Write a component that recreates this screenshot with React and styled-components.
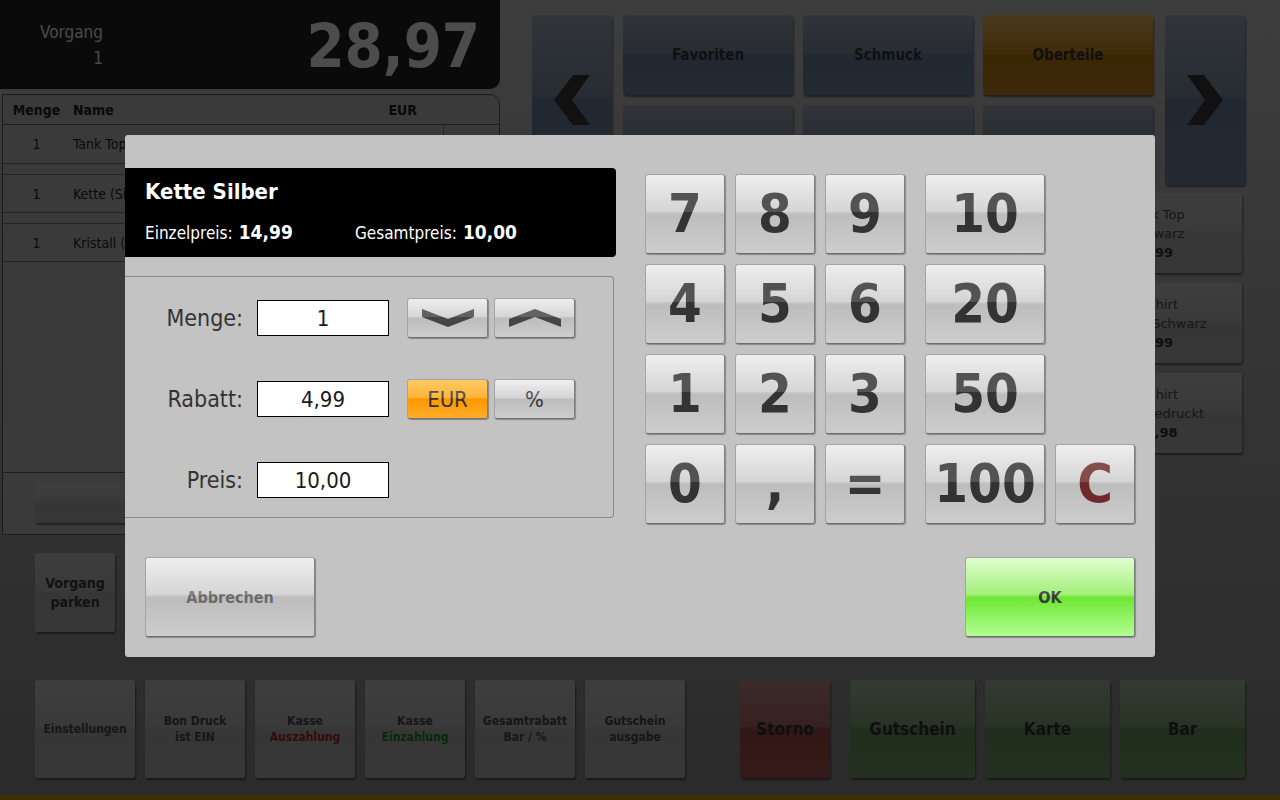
import React from 'react'
import styled, { createGlobalStyle, css } from 'styled-components'

const FONT = `"DejaVu Sans Condensed", "DejaVu Sans", sans-serif`

const GlobalStyle = createGlobalStyle`
  html, body { margin: 0; padding: 0; }
  body { background: #000; font-family: ${FONT}; }
  * { box-sizing: border-box; }
  button { font-family: ${FONT}; }
`

// glossy button backgrounds: light upper half, sharp step, slightly lighter foot
const gloss = (a, b, c, d) => css`
  background: linear-gradient(to bottom, ${a} 0%, ${b} 47%, ${c} 51%, ${d} 100%);
`

const Screen = styled.div`
  position: relative;
  width: 1280px;
  height: 800px;
  overflow: hidden;
  display: flex;
  flex-direction: column;
  background: linear-gradient(to bottom, #cdcdcd, #8f8f8f);
  font-family: ${FONT};
`

const Upper = styled.div`
  display: flex;
  height: 680px;
`

const LeftCol = styled.div`
  width: 500px;
  display: flex;
  flex-direction: column;
`

const TotalBar = styled.div`
  height: 89px;
  background: #222;
  border-radius: 0 0 10px 0;
  display: flex;
  align-items: center;
  justify-content: space-between;
  padding: 0 20px 0 40px;
  color: #fff;
`

const Vorgang = styled.div`
  text-align: right;
  font-size: 17px;
  line-height: 26px;
  color: #f2f2f2;
`

const Total = styled.div`
  font-size: 61px;
  font-weight: bold;
  line-height: 1;
  margin-top: 2px;
`

const ListPanel = styled.div`
  margin: 5px 0 0 2px;
  height: 441px;
  border: 1px solid #5a5a5a;
  border-radius: 0 10px 0 0;
  background: #c4c4c4;
  display: flex;
  flex-direction: column;
`

const rowGrid = css`
  display: grid;
  grid-template-columns: 67px 1fr 113px 56px;
  align-items: center;
`

const ListHeader = styled.div`
  ${rowGrid};
  height: 30px;
  border-bottom: 1px solid #6a6a6a;
  font-size: 14px;
  font-weight: bold;
  color: #1e1e1e;
`

const Cell = styled.div`
  padding: ${p => (p.$center ? '0' : '0 0 0 3px')};
  text-align: ${p => (p.$center ? 'center' : p.$right ? 'right' : 'left')};
  padding-right: ${p => (p.$right ? '26px' : '0')};
  white-space: nowrap;
  overflow: hidden;
`

const ListRow = styled.div`
  ${rowGrid};
  height: 39px;
  border-bottom: 1px solid #7a7a7a;
  font-size: 14px;
  color: #222;

  & + & {
    margin-top: 10px;
    border-top: 1px solid #7a7a7a;
  }
`

const ActionCell = styled.div`
  height: 100%;
  border-left: 1px solid #7a7a7a;
  display: flex;
  align-items: center;
  justify-content: center;
  gap: 6px;
`

const RoundIcon = styled.span`
  width: 16px;
  height: 16px;
  border-radius: 50%;
  background: ${p => p.$tone};
  color: #fff;
  font-size: 13px;
  line-height: 16px;
  text-align: center;
  font-weight: bold;
`

const ListBody = styled.div`
  flex: 1;
`

const ListFooter = styled.div`
  height: 62px;
  border-top: 1px solid #666;
  display: flex;
  gap: 30px;
  padding: 9px 0 0 32px;
`

const greyButton = css`
  border: none;
  border-radius: 3px;
  ${gloss('#cfcfcf', '#c2c2c2', '#b6b6b6', '#b8b8b8')};
  box-shadow: 1px 2px 2px rgba(0, 0, 0, 0.45);
  color: #4a4a4a;
  font-weight: bold;
`

const PanelButton = styled.button`
  ${greyButton};
  width: 200px;
  height: 41px;
  font-size: 14px;
  padding-left: 40px;
`

const ParkRow = styled.div`
  padding: 18px 0 0 35px;
`

const ParkButton = styled.button`
  ${greyButton};
  width: 80px;
  height: 79px;
  font-size: 14px;
  line-height: 19px;
  color: #3c3c3c;
`

const RightCol = styled.div`
  flex: 1;
  padding: 15px 35px 0 32px;
  display: flex;
  flex-direction: column;
`

const CategoryArea = styled.div`
  display: flex;
  gap: 11px;
  height: 170px;
`

const blueButton = css`
  border: none;
  border-radius: 3px;
  ${gloss('#a4b0c0', '#8496ac', '#6e86a4', '#768da9')};
  box-shadow: 1px 2px 2px rgba(0, 0, 0, 0.45);
`

const ArrowButton = styled.button`
  ${blueButton};
  width: 80px;
  height: 170px;
  display: flex;
  align-items: center;
  justify-content: center;
  padding: 0;
  margin-left: ${p => (p.$next ? '1px' : '0')};
`

const CategoryGrid = styled.div`
  display: grid;
  grid-template-columns: repeat(3, 170px);
  grid-template-rows: 80px 80px;
  gap: 10px;
`

const CategoryButton = styled.button`
  ${blueButton};
  ${p => p.$active && gloss('#f0bc64', '#d99420', '#c4800a', '#cc8c26')};
  font-size: 15px;
  font-weight: bold;
  color: #383838;
`

const ProductGrid = styled.div`
  margin-top: 8px;
  display: grid;
  grid-template-columns: repeat(4, 170px);
  grid-auto-rows: 80px;
  gap: 10px;
`

const ProductTile = styled.div`
  ${greyButton};
  display: flex;
  flex-direction: column;
  align-items: center;
  justify-content: center;
  font-family: "DejaVu Sans", sans-serif;
  font-weight: normal;
  font-size: 13px;
  line-height: 19px;
  color: #4a4a4a;
  padding-top: 1px;

  b { color: #333; }
`

const BottomBar = styled.div`
  height: 98px;
  margin-bottom: 17px;
  display: flex;
  padding-left: 35px;
`

const FuncGroup = styled.div`
  display: flex;
  gap: 10px;
`

const FuncButton = styled.button`
  ${greyButton};
  width: 100px;
  height: 98px;
  font-size: 12px;
  line-height: 16px;
  color: #4a4a4a;
`

const Tinted = styled.span`
  color: ${p => p.$tone};
`

const PayGroup = styled.div`
  display: flex;
  gap: 10px;
  margin-left: 55px;
`

const PayButton = styled.button`
  border: none;
  border-radius: 3px;
  height: 98px;
  width: ${p => p.$w}px;
  margin-right: ${p => (p.$gapAfter ? '10px' : '0')};
  box-shadow: 1px 2px 2px rgba(0, 0, 0, 0.45);
  font-size: 17px;
  font-weight: bold;
  color: #333;
  ${p =>
    p.$red
      ? gloss('#c89090', '#b86c6c', '#a84c4c', '#b25858')
      : gloss('#b0c4a6', '#8aab7c', '#6c9a5e', '#7aa46c')};
`

const GoldStrip = styled.div`
  height: 5px;
  margin-top: auto;
  background: #c89b00;
`

const Overlay = styled.div`
  position: absolute;
  inset: 0;
  background: rgba(0, 0, 0, 0.7);
`

const Dialog = styled.div`
  position: absolute;
  left: 125px;
  top: 135px;
  width: 1030px;
  height: 522px;
  background: #c3c3c3;
  border-radius: 3px;
  display: flex;
  flex-direction: column;
  padding-bottom: 20px;
`

const DialogBody = styled.div`
  display: flex;
  padding-top: 33px;
`

const LeftPane = styled.div`
  width: 491px;
  display: flex;
  flex-direction: column;
  gap: 19px;
`

const InfoBox = styled.div`
  height: 89px;
  background: #000;
  border-radius: 0 4px 4px 0;
  padding: 11px 20px 0;
  color: #fff;
`

const ItemTitle = styled.div`
  font-size: 22px;
  font-weight: bold;
  line-height: 26px;
`

const PriceLine = styled.div`
  display: flex;
  margin-top: 14px;
  line-height: 26px;
`

const PriceGroup = styled.div`
  width: ${p => p.$w || 'auto'};
  font-size: 17px;

  b {
    font-size: 19px;
    margin-left: 6px;
  }
`

const FormPanel = styled.div`
  width: 489px;
  height: 242px;
  border: 1px solid #8a8a8a;
  border-left: none;
  border-radius: 0 4px 4px 0;
  padding-top: 21px;
  display: flex;
  flex-direction: column;
  gap: 41px;
`

const FormRow = styled.div`
  display: flex;
  align-items: center;
  height: 40px;
`

const Label = styled.div`
  width: 132px;
  padding-right: 14px;
  text-align: right;
  font-size: 23px;
  color: #333;
`

const ValueBox = styled.div`
  width: 132px;
  height: 36px;
  background: #fff;
  border: 1px solid #000;
  display: flex;
  align-items: center;
  justify-content: center;
  font-size: 22px;
  color: #1a1a1a;
`

const ToggleGroup = styled.div`
  display: flex;
  gap: 6px;
  margin-left: 18px;
`

const keyBase = css`
  position: relative;
  padding: 0;
  border: 1px solid #a4a4a4;
  border-right-color: #808080;
  border-bottom-color: #6e6e6e;
  border-radius: 3px;
  box-shadow: 1px 1px 1px rgba(0, 0, 0, 0.3);
  ${gloss('#ececec', '#cdcdcd', '#bdbdbd', '#cdcdcd')};

  &::after {
    content: '';
    position: absolute;
    left: 0;
    right: 0;
    top: 0;
    height: 48%;
    border-radius: 2px 2px 0 0;
    background: rgba(255, 255, 255, 0.16);
    pointer-events: none;
  }
`

const SmallKey = styled.button`
  ${keyBase};
  width: 81px;
  height: 40px;
  display: flex;
  align-items: center;
  justify-content: center;
  font-size: 22px;
  color: #333;
  ${p => p.$active && gloss('#ffbf45', '#ffa714', '#ff9800', '#ffae2c')};
`

const Keypad = styled.div`
  margin: 6px 0 0 29px;
  display: grid;
  grid-template-columns: 80px 80px 80px 130px 80px;
  grid-template-rows: repeat(4, 80px);
  gap: 10px;
`

const Key = styled.button`
  ${keyBase};
  grid-column: ${p => p.$col};
  grid-row: ${p => p.$row};
  width: ${p => (p.$wide ? '120px' : '80px')};
  height: 80px;
  justify-self: end;
  font-size: 54px;
  font-weight: bold;
  line-height: 1;
  color: ${p => (p.$clear ? '#6e2a2a' : '#333')};
`

const DialogFooter = styled.div`
  margin-top: auto;
  display: flex;
  justify-content: space-between;
  padding: 0 20px;
`

const FooterButton = styled.button`
  ${keyBase};
  width: 170px;
  height: 80px;
  font-size: 16px;
  font-weight: bold;
  color: ${p => (p.$ok ? '#3a3a3a' : '#6a6a6a')};
  ${p => p.$ok && gloss('#dcffcc', '#99ee6a', '#6ee634', '#b2ff92')};

  &::after {
    background: rgba(255, 255, 255, ${p => (p.$ok ? 0.1 : 0.16)});
  }
`

const Chevron = ({ up }) => (
  <svg width="52" height="18" viewBox="0 0 52 18">
    <polygon
      fill="#454545"
      points={up ? '0,18 26,8 52,18 52,10 26,0 0,10' : '0,0 26,10 52,0 52,8 26,18 0,8'}
    />
  </svg>
)

const Arrow = ({ next }) => (
  <svg width="36" height="50" viewBox="0 0 36 50">
    <polygon
      fill="#3a3a3a"
      points={next ? '0,0 17,0 36,25 17,50 0,50 18,25' : '36,0 19,0 0,25 19,50 36,50 18,25'}
    />
  </svg>
)

const items = [
  { qty: 1, name: 'Tank Top', price: '9,99' },
  { qty: 1, name: 'Kette (Silber)', price: '10,00' },
  { qty: 1, name: 'Kristall (Rosa)', price: '8,98' },
]

const categories = ['Favoriten', 'Schmuck', 'Oberteile', '', '', '']

// the first three tile columns sit behind the dialog; only the last one shows
const products = [
  null, null, null, ['Tank Top', 'Schwarz', '9,99'],
  null, null, null, ['T-Shirt', 'Weiß - Schwarz', '9,99'],
  null, null, null, ['T-Shirt', 'Grau Bedruckt', '12,98'],
]

// label, row, column; column 4 holds the wide amount keys, column 5 the clear key
const keys = [
  ['7', 1, 1], ['8', 1, 2], ['9', 1, 3], ['10', 1, 4],
  ['4', 2, 1], ['5', 2, 2], ['6', 2, 3], ['20', 2, 4],
  ['1', 3, 1], ['2', 3, 2], ['3', 3, 3], ['50', 3, 4],
  ['0', 4, 1], [',', 4, 2], ['=', 4, 3], ['100', 4, 4], ['C', 4, 5],
]

export default function App() {
  return (
    <Screen>
      <GlobalStyle />

      <Upper>
        <LeftCol>
          <TotalBar>
            <Vorgang>
              Vorgang
              <br />1
            </Vorgang>
            <Total>28,97</Total>
          </TotalBar>

          <ListPanel>
            <ListHeader>
              <Cell $center>Menge</Cell>
              <Cell>Name</Cell>
              <Cell $right>EUR</Cell>
              <div />
            </ListHeader>
            <ListBody>
              {items.map((it, i) => (
                <ListRow key={i}>
                  <Cell $center>{it.qty}</Cell>
                  <Cell>{it.name}</Cell>
                  <Cell $right>{it.price}</Cell>
                  <ActionCell>
                    <RoundIcon $tone="#b03030">−</RoundIcon>
                    <RoundIcon $tone="#c04040">×</RoundIcon>
                  </ActionCell>
                </ListRow>
              ))}
            </ListBody>
            <ListFooter>
              <PanelButton>Manuell</PanelButton>
              <PanelButton>Rabatt</PanelButton>
            </ListFooter>
          </ListPanel>

          <ParkRow>
            <ParkButton>
              Vorgang
              <br />
              parken
            </ParkButton>
          </ParkRow>
        </LeftCol>

        <RightCol>
          <CategoryArea>
            <ArrowButton>
              <Arrow />
            </ArrowButton>
            <CategoryGrid>
              {categories.map((c, i) => (
                <CategoryButton key={i} $active={c === 'Oberteile'}>
                  {c}
                </CategoryButton>
              ))}
            </CategoryGrid>
            <ArrowButton $next>
              <Arrow next />
            </ArrowButton>
          </CategoryArea>

          <ProductGrid>
            {products.map((p, i) => (
              <ProductTile key={i}>
                {p && (
                  <>
                    <span>{p[0]}</span>
                    <span>{p[1]}</span>
                    <b>{p[2]}</b>
                  </>
                )}
              </ProductTile>
            ))}
          </ProductGrid>
        </RightCol>
      </Upper>

      <BottomBar>
        <FuncGroup>
          <FuncButton>Einstellungen</FuncButton>
          <FuncButton>
            Bon Druck
            <br />
            ist EIN
          </FuncButton>
          <FuncButton>
            Kasse
            <br />
            <Tinted $tone="#b81c1c">Auszahlung</Tinted>
          </FuncButton>
          <FuncButton>
            Kasse
            <br />
            <Tinted $tone="#1a8a1a">Einzahlung</Tinted>
          </FuncButton>
          <FuncButton>
            Gesamtrabatt
            <br />
            Bar / %
          </FuncButton>
          <FuncButton>
            Gutschein
            <br />
            ausgabe
          </FuncButton>
        </FuncGroup>
        <PayGroup>
          <PayButton $red $w={90} $gapAfter>
            Storno
          </PayButton>
          <PayButton $w={125}>Gutschein</PayButton>
          <PayButton $w={125}>Karte</PayButton>
          <PayButton $w={125}>Bar</PayButton>
        </PayGroup>
      </BottomBar>

      <GoldStrip />

      <Overlay />

      <Dialog>
        <DialogBody>
          <LeftPane>
            <InfoBox>
              <ItemTitle>Kette Silber</ItemTitle>
              <PriceLine>
                <PriceGroup $w="210px">
                  Einzelpreis:<b>14,99</b>
                </PriceGroup>
                <PriceGroup>
                  Gesamtpreis:<b>10,00</b>
                </PriceGroup>
              </PriceLine>
            </InfoBox>

            <FormPanel>
              <FormRow>
                <Label>Menge:</Label>
                <ValueBox>1</ValueBox>
                <ToggleGroup>
                  <SmallKey>
                    <Chevron />
                  </SmallKey>
                  <SmallKey>
                    <Chevron up />
                  </SmallKey>
                </ToggleGroup>
              </FormRow>
              <FormRow>
                <Label>Rabatt:</Label>
                <ValueBox>4,99</ValueBox>
                <ToggleGroup>
                  <SmallKey $active>EUR</SmallKey>
                  <SmallKey>%</SmallKey>
                </ToggleGroup>
              </FormRow>
              <FormRow>
                <Label>Preis:</Label>
                <ValueBox>10,00</ValueBox>
              </FormRow>
            </FormPanel>
          </LeftPane>

          <Keypad>
            {keys.map(([k, row, col]) => (
              <Key key={k} $row={row} $col={col} $wide={col === 4} $clear={k === 'C'}>
                {k}
              </Key>
            ))}
          </Keypad>
        </DialogBody>

        <DialogFooter>
          <FooterButton>Abbrechen</FooterButton>
          <FooterButton $ok>OK</FooterButton>
        </DialogFooter>
      </Dialog>
    </Screen>
  )
}
